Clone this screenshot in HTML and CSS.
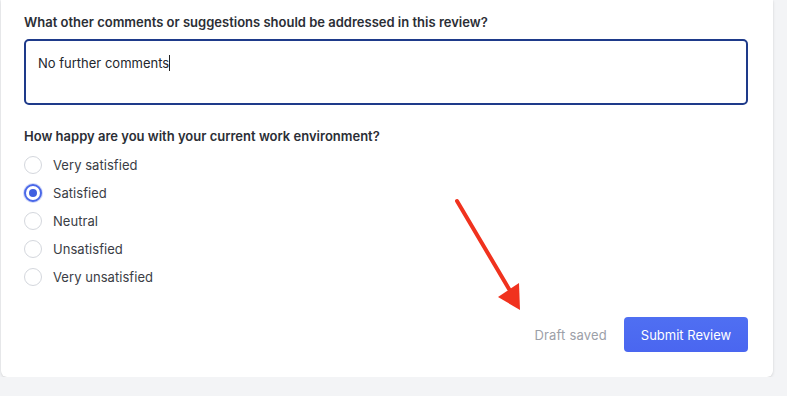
FILE: index.html
```html
<!DOCTYPE html>
<html lang="en">
<head>
<meta charset="utf-8">
<title>Review</title>
<link rel="stylesheet" href="styles.css">
</head>
<body>
<div class="card">
  <div class="field-label">What other comments or suggestions should be addressed in this review?</div>
  <div class="textbox">No further comments<span class="caret"></span></div>

  <div class="field-label q2">How happy are you with your current work environment?</div>
  <div class="options">
    <label class="option"><span class="radio"></span>Very satisfied</label>
    <label class="option"><span class="radio checked"></span>Satisfied</label>
    <label class="option"><span class="radio"></span>Neutral</label>
    <label class="option"><span class="radio"></span>Unsatisfied</label>
    <label class="option"><span class="radio"></span>Very unsatisfied</label>
  </div>

  <div class="footer">
    <span class="draft">Draft saved</span>
    <button class="submit">Submit Review</button>
  </div>

  <svg class="arrow" width="90" height="130" viewBox="0 0 90 130">
    <line x1="4" y1="4" x2="56" y2="92" stroke="#f0321e" stroke-width="4" stroke-linecap="round"/>
    <polygon points="67,113 45,100 66,86" fill="#f0321e"/>
  </svg>
</div>
</body>
</html>
```
FILE: styles.css
```css
html, body {
  margin: 0;
  padding: 0;
  background: #f3f4f6;
  font-family: Inter, "Noto Sans", sans-serif;
  -webkit-font-smoothing: antialiased;
}

.card {
  position: relative;
  margin-left: 1px;
  width: 772px;
  box-sizing: border-box;
  background: #ffffff;
  border-radius: 0 0 6px 6px;
  box-shadow: 0 1px 3px rgba(0, 0, 0, 0.12), 0 0 1px rgba(0, 0, 0, 0.08);
  padding: 13px 25px 25px 23px;
}

.field-label {
  font-size: 13px;
  line-height: 18px;
  font-weight: 600;
  color: #2b2e35;
}

.textbox {
  margin-top: 8px;
  height: 66px;
  box-sizing: border-box;
  border: 2px solid #1e3a8a;
  border-radius: 5px;
  padding: 13px 12px;
  font-size: 13px;
  line-height: 18px;
  color: #23262d;
}

.caret {
  display: inline-block;
  width: 1px;
  height: 16px;
  background: #222;
  vertical-align: -3px;
}

.q2 {
  margin-top: 22px;
}

.options {
  margin-top: 6px;
  display: flex;
  flex-direction: column;
}

.option {
  display: flex;
  align-items: center;
  height: 28px;
  gap: 11px;
  font-size: 13px;
  color: #3a3d45;
  letter-spacing: 0.05px;
}

.radio {
  width: 18px;
  height: 18px;
  box-sizing: border-box;
  border: 1px solid #d4d7dd;
  border-radius: 50%;
  background: #fff;
  position: relative;
  flex: none;
}

.radio.checked {
  border: 2px solid #4a68e8;
  box-shadow: 0 0 0 1px rgba(74, 104, 232, 0.25);
}

.radio.checked::after {
  content: "";
  position: absolute;
  left: 3px;
  top: 3px;
  width: 8px;
  height: 8px;
  border-radius: 50%;
  background: #3f5fe0;
}

.footer {
  margin-top: 26px;
  display: flex;
  justify-content: flex-end;
  align-items: center;
  gap: 17px;
}

.draft {
  font-size: 13px;
  color: #9ca0a8;
  letter-spacing: 0.2px;
}

.submit {
  width: 124px;
  height: 35px;
  border: none;
  border-radius: 4px;
  background: linear-gradient(180deg, #4f6ff2 0%, #4a66f0 100%);
  color: #ffffff;
  font-family: Inter, "Noto Sans", sans-serif;
  font-size: 13px;
  padding: 0;
}

.arrow {
  position: absolute;
  left: 452px;
  top: 197px;
}
```
